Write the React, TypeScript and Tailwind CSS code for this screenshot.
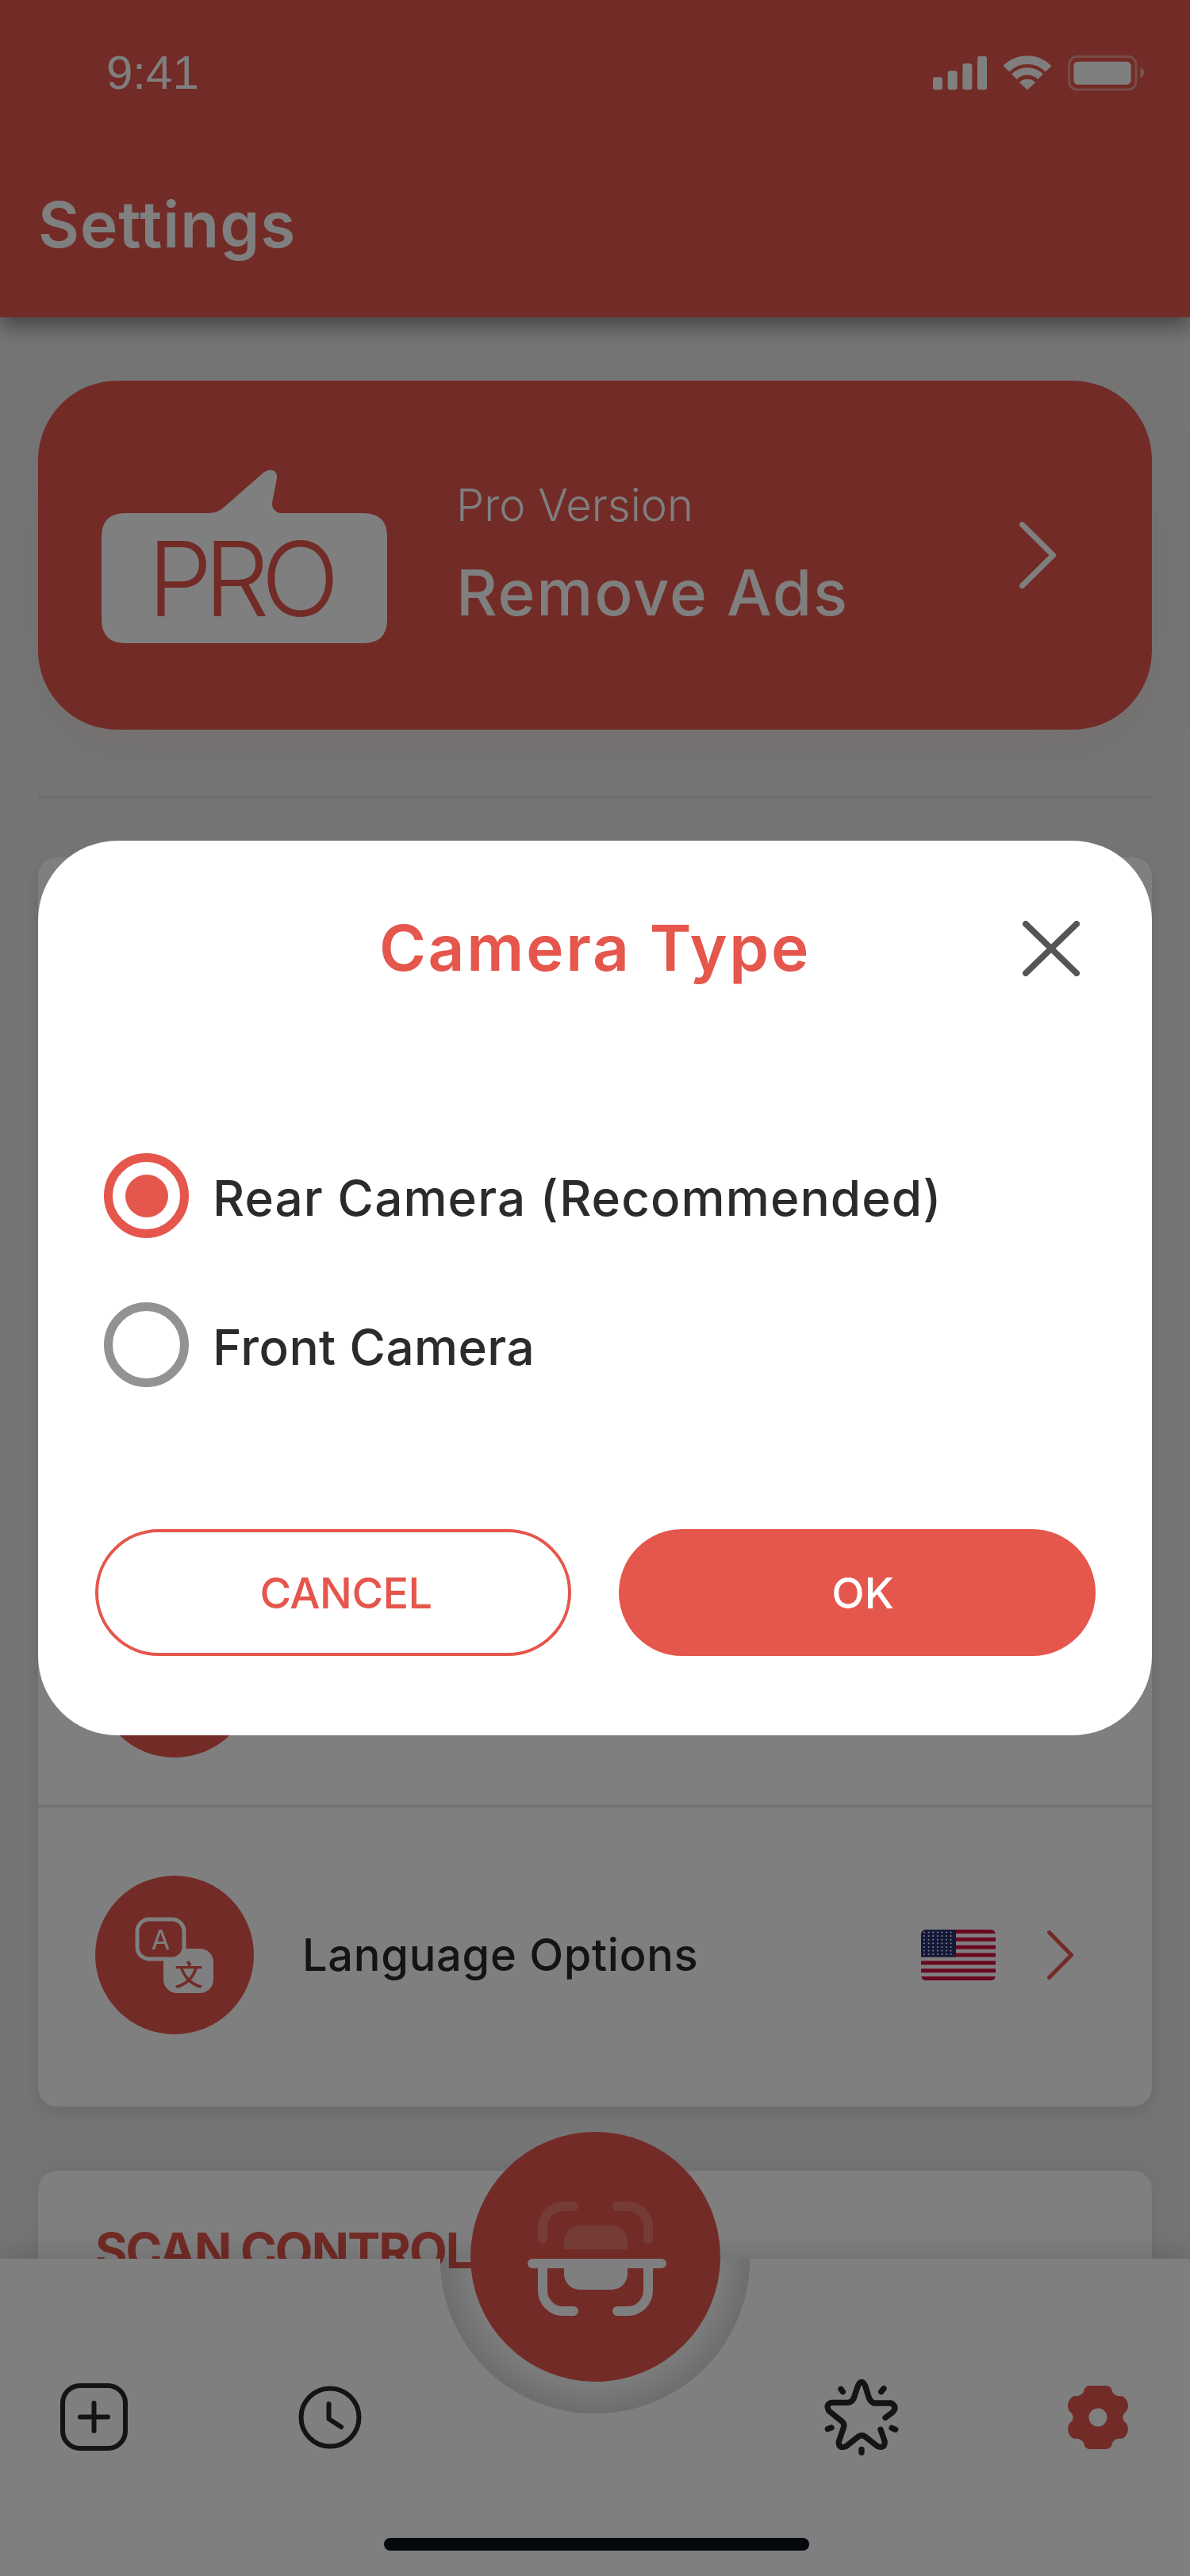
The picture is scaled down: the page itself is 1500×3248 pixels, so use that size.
const RED = '#e5564c';

function StatusIcons() {
  return (
    <svg width="300" height="75" viewBox="0 0 900 225" className="mt-[55px] mr-[40px] shrink-0">
      <rect x="48" y="127" width="36" height="48" rx="10" fill="white" />
      <rect x="104" y="103" width="36" height="72" rx="10" fill="white" />
      <rect x="160" y="75" width="36" height="100" rx="10" fill="white" />
      <rect x="216" y="47" width="36" height="128" rx="10" fill="white" />
      <path d="M325 95 A113 113 0 0 1 485 95" fill="none" stroke="white" strokeWidth="32" />
      <path d="M355 125 A71 71 0 0 1 455 125" fill="none" stroke="white" strokeWidth="28" />
      <path d="M405 175 L375 147 A42 42 0 0 1 435 147 Z" fill="white" />
      <rect x="563" y="49" width="253" height="125" rx="30" fill="none" stroke="white" strokeOpacity="0.4" strokeWidth="9" />
      <rect x="580" y="68" width="217" height="87" rx="16" fill="white" />
      <path d="M832 90 Q848 98 848 110 Q848 122 832 130 Z" fill="white" fillOpacity="0.45" />
    </svg>
  );
}

function ProBadge() {
  return (
    <svg width="360" height="225" viewBox="0 0 360 225" className="mt-[110px] ml-[80px] shrink-0">
      <path
        d="M30 57 H135 Q146 57 155 49 L204 6 Q210 1 216 3 Q222 6 221 13 L215 44 Q214 53 224 57 H330 Q360 57 360 87 V191 Q360 221 330 221 H30 Q0 221 0 191 V87 Q0 57 30 57 Z"
        fill="white"
      />
      <text x="58" y="187" fontSize="130" fontWeight="300" fontFamily="Inter, sans-serif" fill={RED} textLength="242" lengthAdjust="spacing">
        PRO
      </text>
    </svg>
  );
}

function Chevron({ w, h, sw, color, className }: { w: number; h: number; sw: number; color: string; className: string }) {
  return (
    <svg width={w} height={h} viewBox={`0 0 ${w} ${h}`} className={className}>
      <path d={`M${sw / 2} ${sw / 2} L${w - sw / 2} ${h / 2} L${sw / 2} ${h - sw / 2}`} fill="none" stroke={color} strokeWidth={sw} strokeLinecap="round" strokeLinejoin="round" />
    </svg>
  );
}

function TranslateIcon() {
  return (
    <svg width="200" height="200" viewBox="0 0 200 200">
      <rect x="86" y="92" width="63" height="56" rx="17" fill="white" />
      <rect x="53" y="55" width="59" height="50" rx="15" fill={RED} stroke="white" strokeWidth="5" />
      <text x="82.5" y="93" textAnchor="middle" fontSize="34" fontFamily="Inter, sans-serif" fill="white">A</text>
      <text x="118" y="139" textAnchor="middle" fontSize="36" fontWeight="500" fontFamily="'Noto Sans CJK SC', sans-serif" fill={RED}>文</text>
    </svg>
  );
}

function UsFlag() {
  const stripes = Array.from({ length: 7 }, (_, i) => i);
  const stars: [number, number][] = [];
  for (let r = 0; r < 7; r++) {
    for (let c = 0; c < 7; c++) stars.push([4 + c * 5.6, 3.5 + r * 4.6]);
  }
  return (
    <svg width="94" height="64" viewBox="0 0 94 64" className="ml-auto shrink-0 rounded-[6px]">
      <rect width="94" height="64" fill="white" />
      {stripes.map((i) => (
        <rect key={i} y={i * 9.85} width="94" height="4.92" fill="#d0103a" />
      ))}
      <rect width="44" height="34.5" fill="#2a3372" />
      {stars.map(([x, y]) => (
        <circle key={`${x}-${y}`} cx={x} cy={y} r="1" fill="white" />
      ))}
    </svg>
  );
}

function ScanIcon() {
  return (
    <svg width="315" height="315" viewBox="0 0 315 315" className="absolute left-[593px] top-[-160px]">
      <circle cx="157.5" cy="157.5" r="157.5" fill={RED} />
      <g fill="none" stroke="white" strokeWidth="12" strokeLinecap="round">
        <g strokeOpacity="0.2">
          <path d="M130 94 H117 A26 26 0 0 0 91 120 V135" />
          <path d="M185 94 H198 A26 26 0 0 1 224 120 V135" />
        </g>
        <path d="M78 166 H241" />
        <path d="M91 172 V200 A26 26 0 0 0 117 226 H130" />
        <path d="M224 172 V200 A26 26 0 0 1 198 226 H185" />
      </g>
      <path d="M118 148 V138 A20 20 0 0 1 138 118 H178 A20 20 0 0 1 198 138 V148 Z" fill="white" fillOpacity="0.2" />
      <path d="M118 172 V180 A20 20 0 0 0 138 199 H178 A20 20 0 0 0 198 180 V172 Z" fill="white" />
    </svg>
  );
}

function NewScanIcon() {
  return (
    <svg width="85" height="85" viewBox="0 0 85 85" className="ml-[76px] shrink-0">
      <rect x="3" y="3" width="79" height="79" rx="22" fill="none" stroke="#282828" strokeWidth="6" />
      <path d="M25 42.5 H60 M42.5 25 V60" fill="none" stroke="#282828" strokeWidth="6" strokeLinecap="round" />
    </svg>
  );
}

function HistoryIcon() {
  return (
    <svg width="80" height="80" viewBox="0 0 80 80" className="ml-[215px] shrink-0">
      <circle cx="40" cy="40" r="36.5" fill="none" stroke="#282828" strokeWidth="6" />
      <path d="M38.5 23 V42 L54 52" fill="none" stroke="#282828" strokeWidth="6" strokeLinecap="round" strokeLinejoin="round" />
    </svg>
  );
}

function StarIcon() {
  return (
    <svg width="130" height="125" viewBox="0 0 390 375" className="ml-auto shrink-0">
      <path
        d="M288 190 L315 170 Q335 150 310 135 H245 Q232 130 226 115 L212 70 Q198 40 184 70 L168 118 Q160 133 145 133 H85 Q60 140 75 165 L125 205 Q135 215 130 228 L112 280 Q110 310 140 298 L185 262 Q198 252 212 262 L258 298 Q288 310 285 278 L270 235"
        fill="none"
        stroke="#282828"
        strokeWidth="22"
        strokeLinecap="round"
        strokeLinejoin="round"
      />
      <path
        d="M120 82 L127 92 M282 80 L272 92 M70 233 L84 228 M312 229 L326 235 M198 310 L198 322"
        fill="none"
        stroke="#282828"
        strokeWidth="22"
        strokeLinecap="round"
      />
    </svg>
  );
}

function GearIcon() {
  return (
    <svg width="76" height="80" viewBox="0 0 76 80" className="ml-[196px] mr-[78px] shrink-0">
      <path
        fill={RED}
        fillRule="evenodd"
        d="M28 0 H48 Q55 0 56 8 Q60 14 67 13 Q74 14 76 24 Q76 32 71 35 Q68 40 71 45 Q76 48 76 56 Q74 66 67 67 Q60 66 56 72 Q55 80 48 80 H28 Q21 80 20 72 Q16 66 9 67 Q2 66 0 56 Q0 48 5 45 Q8 40 5 35 Q0 32 0 24 Q2 14 9 13 Q16 14 20 8 Q21 0 28 0 Z M38 28.5 A11.5 11.5 0 1 0 38 51.5 A11.5 11.5 0 1 0 38 28.5 Z"
      />
    </svg>
  );
}

export default function App() {
  return (
    <div className="relative flex h-[3248px] w-[1500px] flex-col overflow-hidden bg-[#eaeaea] [font-family:Inter,sans-serif]">
      <header className="relative z-10 h-[400px] shrink-0 bg-[#e5564c] text-white shadow-[0_10px_26px_rgba(0,0,0,0.45)]">
        <div className="flex h-[130px] items-start justify-between">
          <span className="ml-[134px] mt-[62px] text-[60px] leading-[60px] [font-family:'Liberation_Sans',sans-serif]">9:41</span>
          <StatusIcons />
        </div>
        <h1 className="ml-[48px] mt-[113px] text-[80px] font-semibold leading-[80px] tracking-[1px]">Settings</h1>
      </header>

      <section className="mx-[48px] mt-[80px] flex h-[440px] shrink-0 items-start rounded-[100px] bg-[#e5564c] text-white shadow-[0_30px_80px_rgba(229,86,76,0.08)]">
        <ProBadge />
        <div className="ml-[87px] mt-[129px]">
          <p className="text-[56px] font-light leading-[56px]">Pro Version</p>
          <p className="mt-[42px] text-[80px] font-medium leading-[80px] tracking-[1.8px]">Remove Ads</p>
        </div>
        <Chevron w={46} h={84} sw={7} color="white" className="ml-auto mr-[121px] mt-[178px] shrink-0" />
      </section>

      <div className="mx-[48px] mt-[83px] h-[4px] shrink-0 bg-[#dcdcdc]" />

      <section className="mx-[48px] mt-[74px] shrink-0 rounded-[24px] bg-white shadow-[0_8px_24px_rgba(0,0,0,0.1)]">
        <div className="flex h-[1194px] items-end pb-[59px] pl-[72px]">
          <div className="h-[200px] w-[200px] rounded-full bg-[#e5564c]" />
        </div>
        <div className="h-[4px] bg-[#e8e8e8]" />
        <div className="flex h-[377px] items-start pt-[86px]">
          <div className="flex h-[200px] w-full items-center pl-[72px]">
            <div className="h-[200px] w-[200px] shrink-0 rounded-full bg-[#e5564c]">
              <TranslateIcon />
            </div>
            <p className="ml-[61px] text-[56px] font-medium leading-[56px] tracking-[0.7px] text-[#282828]">Language Options</p>
            <UsFlag />
            <Chevron w={33} h={62} sw={5} color={RED} className="ml-[65px] mr-[99px] shrink-0" />
          </div>
        </div>
      </section>

      <section className="mx-[48px] mt-[81px] h-[600px] shrink-0 rounded-[24px] bg-white pl-[72px] pt-[70px] shadow-[0_-8px_30px_rgba(0,0,0,0.06)]">
        <p className="text-[62px] font-bold leading-[62px] tracking-[-2px] text-[#e5564c]">SCAN CONTROL</p>
      </section>

      <nav className="absolute bottom-0 left-0 h-[400px] w-full bg-[radial-gradient(circle_at_750px_0,rgba(0,0,0,0.03)_158px,rgba(0,0,0,0.14)_195px,white_195.5px)] shadow-[0_-10px_30px_rgba(0,0,0,0.12)]">
        <ScanIcon />
        <div className="mt-[152px] flex h-[95px] items-center">
          <NewScanIcon />
          <HistoryIcon />
          <StarIcon />
          <GearIcon />
        </div>
        <div className="ml-[484px] mt-[105px] h-[16px] w-[536px] rounded-full bg-[#0a1018]" />
      </nav>

      <div className="absolute inset-0 z-20 flex items-center justify-center bg-black/50">
        <div className="relative h-[1128px] w-[1404px] rounded-[100px] bg-white pt-[95px]">
          <h2 className="text-center text-[80px] font-semibold leading-[80px] tracking-[2.8px] text-[#e5564c]">Camera Type</h2>
          <svg width="72" height="70" viewBox="0 0 72 70" className="absolute left-[1241px] top-[101px]">
            <path d="M4 4 L68 66 M68 4 L4 66" fill="none" stroke="#555555" strokeWidth="8" strokeLinecap="round" />
          </svg>

          <div className="ml-[83px] mt-[219px] flex h-[107px] items-center">
            <div className="flex h-[107px] w-[107px] shrink-0 items-center justify-center rounded-full border-[11px] border-[#e5564c]">
              <div className="h-[54px] w-[54px] rounded-full bg-[#e5564c]" />
            </div>
            <span className="ml-[30px] mt-[6px] text-[62px] font-medium leading-[60px] tracking-[1.1px] text-[#2b2b2b]">Rear Camera (Recommended)</span>
          </div>
          <div className="ml-[83px] mt-[81px] flex h-[107px] items-center">
            <div className="h-[107px] w-[107px] shrink-0 rounded-full border-[11px] border-[#929292]" />
            <span className="ml-[30px] mt-[6px] text-[62px] font-medium leading-[60px] tracking-[0.4px] text-[#2b2b2b]">Front Camera</span>
          </div>

          <div className="ml-[72px] mt-[179px] flex gap-[60px]">
            <button className="flex h-[160px] w-[600px] items-center justify-center rounded-full border-[4px] border-[#e5564c] pl-[32px] pt-[2px] text-[54px] font-medium leading-none tracking-[-0.5px] text-[#e5564c]">
              CANCEL
            </button>
            <button className="flex h-[160px] w-[601px] items-center justify-center rounded-full bg-[#e5564c] pl-[14px] pt-[2px] text-[54px] font-medium leading-none text-white">
              OK
            </button>
          </div>
        </div>
      </div>
    </div>
  );
}
